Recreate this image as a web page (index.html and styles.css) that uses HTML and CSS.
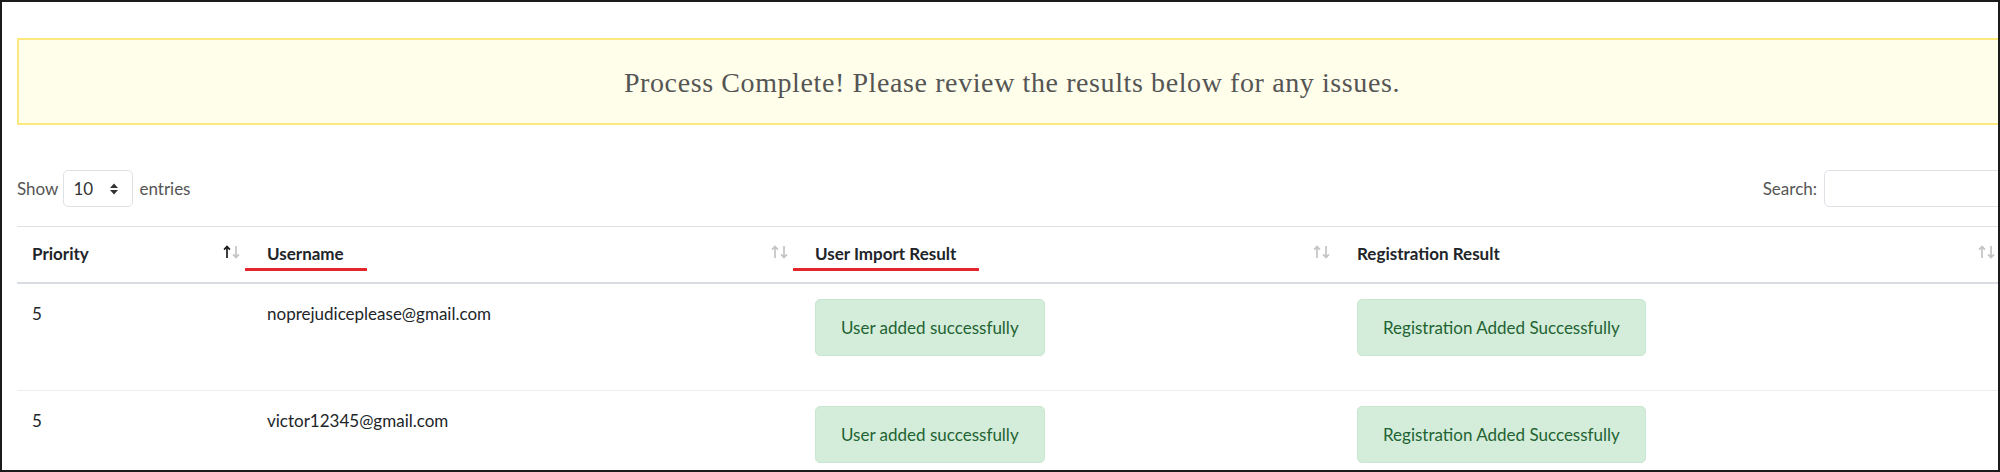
FILE: index.html
```html
<!DOCTYPE html>
<html lang="en">
<head>
<meta charset="utf-8">
<title>Import Results</title>
<link rel="stylesheet" href="styles.css">
</head>
<body>
<div class="frame">
  <div class="page">
    <div class="alert-warn">Process Complete! Please review the results below for any issues.</div>

    <div class="controls">
      <label class="length">Show
        <span class="select"><span class="select-val">10</span>
          <svg class="caret" width="10" height="14" viewBox="0 0 10 14"><path d="M1 6 L5 1.5 L9 6 Z M1 8 L5 12.5 L9 8 Z" fill="#333"/></svg>
        </span>
        entries</label>
      <label class="search">Search: <span class="search-input"></span></label>
    </div>

    <table class="results">
      <colgroup>
        <col class="c1"><col class="c2"><col class="c3"><col class="c4">
      </colgroup>
      <thead>
        <tr>
          <th><div class="th-in"><span>Priority</span>
            <svg class="sort" width="18" height="14" viewBox="0 0 18 14"><g fill="none" stroke-width="1.7"><path d="M4 13V1.5M1.1 4.6L4 1.4L6.9 4.6" stroke="#1d1d1d"/><path d="M13 1V12.5M10.1 9.4L13 12.6L15.9 9.4" stroke="#c4c4c4"/></g></svg></div></th>
          <th><div class="th-in"><span class="mark">Username</span>
            <svg class="sort" width="18" height="14" viewBox="0 0 18 14"><g fill="none" stroke-width="1.7" stroke="#c4c4c4"><path d="M4 13V1.5M1.1 4.6L4 1.4L6.9 4.6"/><path d="M13 1V12.5M10.1 9.4L13 12.6L15.9 9.4"/></g></svg></div></th>
          <th><div class="th-in"><span class="mark">User Import Result</span>
            <svg class="sort" width="18" height="14" viewBox="0 0 18 14"><g fill="none" stroke-width="1.7" stroke="#c4c4c4"><path d="M4 13V1.5M1.1 4.6L4 1.4L6.9 4.6"/><path d="M13 1V12.5M10.1 9.4L13 12.6L15.9 9.4"/></g></svg></div></th>
          <th><div class="th-in"><span>Registration Result</span>
            <svg class="sort" width="18" height="14" viewBox="0 0 18 14"><g fill="none" stroke-width="1.7" stroke="#c4c4c4"><path d="M4 13V1.5M1.1 4.6L4 1.4L6.9 4.6"/><path d="M13 1V12.5M10.1 9.4L13 12.6L15.9 9.4"/></g></svg></div></th>
        </tr>
      </thead>
      <tbody>
        <tr>
          <td>5</td>
          <td>noprejudiceplease@gmail.com</td>
          <td><div class="badge">User added successfully</div></td>
          <td><div class="badge">Registration Added Successfully</div></td>
        </tr>
        <tr>
          <td>5</td>
          <td>victor12345@gmail.com</td>
          <td><div class="badge">User added successfully</div></td>
          <td><div class="badge">Registration Added Successfully</div></td>
        </tr>
      </tbody>
    </table>
  </div>
</div>
</body>
</html>
```

FILE: styles.css
```css
html, body {
  margin: 0;
  padding: 0;
  background: #fff;
}

.frame {
  width: 2000px;
  height: 472px;
  box-sizing: border-box;
  border: 2px solid #1b1b1b;
  overflow: hidden;
  font-family: "Lato", "Liberation Sans", sans-serif;
  color: #212529;
}

.page {
  width: 1990px;
  padding: 36px 0 0 15px;
}

.alert-warn {
  box-sizing: border-box;
  height: 87px;
  border: 2px solid #fbe97e;
  background: #fffeea;
  display: flex;
  align-items: center;
  justify-content: center;
  padding-top: 2px;
  font-family: "Liberation Serif", serif;
  font-size: 28px;
  color: #555;
  letter-spacing: 0.6px;
}

.controls {
  margin-top: 45px;
  height: 37px;
  display: flex;
  justify-content: space-between;
  align-items: center;
  font-size: 17px;
  color: #555;
}

.length, .search {
  display: flex;
  align-items: center;
}

.select {
  box-sizing: border-box;
  width: 70px;
  height: 37px;
  margin: 0 6px 0 5px;
  border: 1px solid #dee2e6;
  border-radius: 5px;
  display: flex;
  align-items: center;
  padding-left: 9px;
  color: #333;
}

.select-val {
  width: 36px;
}

.search-input {
  box-sizing: border-box;
  width: 183px;
  height: 37px;
  margin-left: 7px;
  border: 1px solid #dee2e6;
  border-radius: 5px;
}

.results {
  margin-top: 19px;
  width: 1990px;
  border-collapse: collapse;
  table-layout: fixed;
  font-size: 17px;
}

.c1 { width: 235px; }
.c2 { width: 548px; }
.c3 { width: 542px; }
.c4 { width: 665px; }

.results th {
  text-align: left;
  font-weight: 700;
  padding: 15px 11px 16px 15px;
  line-height: 24px;
  border-top: 1px solid #dee2e6;
  border-bottom: 2px solid #d9dde3;
}

.th-in {
  display: flex;
  justify-content: space-between;
  align-items: center;
}

.mark {
  position: relative;
}

.mark::after {
  content: "";
  position: absolute;
  left: -22px;
  right: -23px;
  bottom: -5px;
  height: 3px;
  background: #e3262d;
}

.sort {
  display: block;
  margin-top: -4px;
}

.results td {
  vertical-align: top;
  padding: 15px 15px 16px 15px;
  line-height: 30px;
}

.results tbody tr:first-child td {
  border-bottom: 1px solid #eceef0;
}

.badge {
  width: max-content;
  box-sizing: border-box;
  padding: 14px 25px;
  line-height: 27px;
  background: #d4edda;
  border: 1px solid #c9e7d0;
  border-radius: 5px;
  color: #1f6332;
  margin-bottom: 18px;
}
```
